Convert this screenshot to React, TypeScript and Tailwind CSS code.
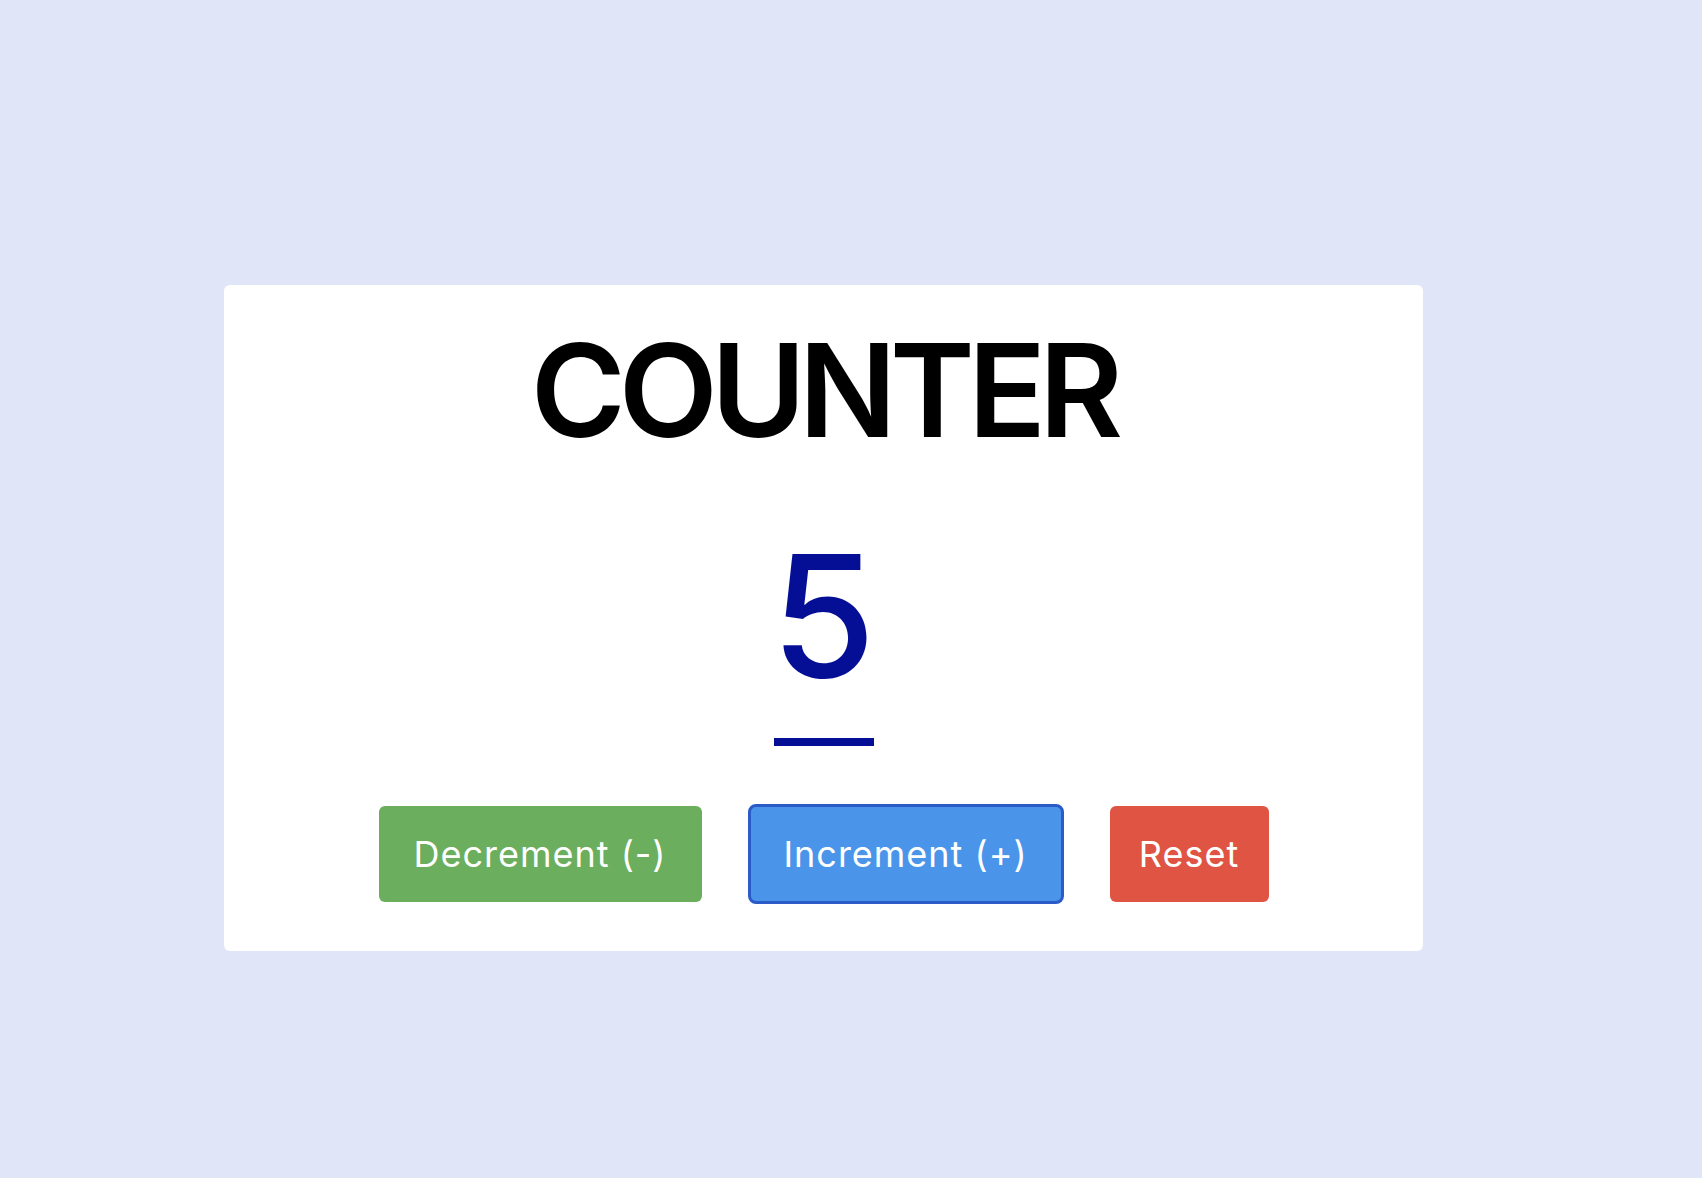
import { useState } from 'react';

const font = { fontFamily: 'Inter, "Noto Sans", sans-serif' };

export default function App() {
  const [count, setCount] = useState(5);

  return (
    <div className="min-h-screen bg-[#e0e6f8] pt-[285px] pl-[224px]" style={font}>
      <div className="w-[1199px] h-[666px] bg-white rounded-[6px] flex flex-col items-center pt-[41px]">
        <h1 className="text-[129px] font-semibold leading-none text-black tracking-[-7px]">COUNTER</h1>

        <div className="mt-[76px] text-[169px] font-medium leading-none text-[#050f96]">{count}</div>
        <div className="mt-[38px] w-[100px] h-[8px] bg-[#050f96]" />

        {/* buttons */}
        <div className="mt-[60px] flex items-center gap-12">
          <button
            onClick={() => setCount(count - 1)}
            className="w-[323px] h-[96px] rounded-[6px] bg-[#6aae5e] text-white text-[36px] tracking-[1px] leading-none"
          >
            Decrement (-)
          </button>
          <button
            onClick={() => setCount(count + 1)}
            className="w-[312px] h-[96px] rounded-[6px] bg-[#4a95ea] text-white text-[36px] tracking-[1px] leading-none outline-[3px] outline-solid outline-[#2a5bc7] -outline-offset-1"
          >
            Increment (+)
          </button>
          <button
            onClick={() => setCount(0)}
            className="w-[159px] h-[96px] rounded-[6px] bg-[#e05443] text-white text-[36px] tracking-[1px] leading-none"
          >
            Reset
          </button>
        </div>
      </div>
    </div>
  );
}
